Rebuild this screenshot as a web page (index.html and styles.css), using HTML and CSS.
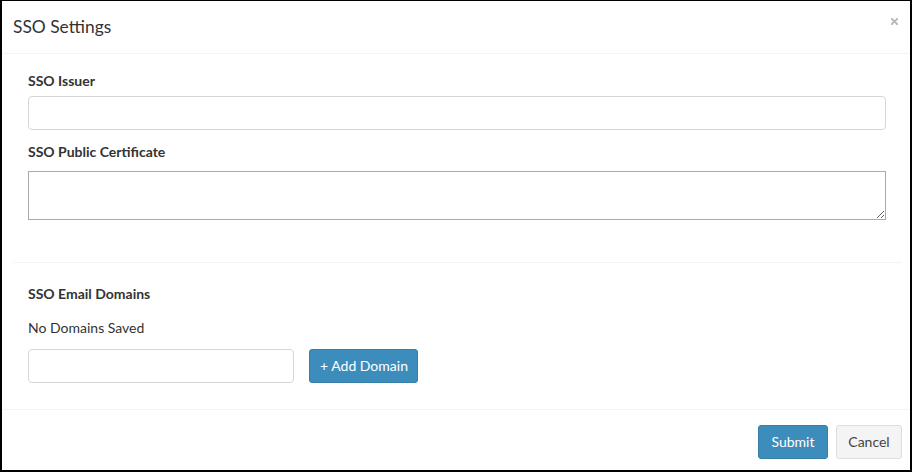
FILE: index.html
```html
<!DOCTYPE html>
<html lang="en">
<head>
<meta charset="utf-8">
<title>SSO Settings</title>
<link rel="stylesheet" href="styles.css">
</head>
<body>
<div class="modal">
  <div class="modal-header">
    <h4 class="modal-title">SSO Settings</h4>
    <button class="close" type="button" aria-label="Close">
      <svg width="7" height="7" viewBox="0 0 7 7"><path d="M0.8 0.8 L6.2 6.2 M6.2 0.8 L0.8 6.2" stroke="#b4b4b4" stroke-width="1.8" stroke-linecap="round"/></svg>
    </button>
  </div>
  <div class="modal-body">
    <div class="section">
      <div class="form-group first">
        <label class="label">SSO Issuer</label>
        <input class="form-control" type="text">
      </div>
      <div class="form-group second">
        <label class="label">SSO Public Certificate</label>
        <textarea class="textarea"></textarea>
      </div>
    </div>
    <hr class="divider">
    <div class="section domains">
      <label class="label">SSO Email Domains</label>
      <p class="note">No Domains Saved</p>
      <div class="domain-row">
        <input class="form-control domain-input" type="text">
        <button class="btn btn-primary add-btn" type="button">+ Add Domain</button>
      </div>
    </div>
  </div>
  <div class="modal-footer">
    <button class="btn btn-primary" type="button">Submit</button>
    <button class="btn btn-default" type="button">Cancel</button>
  </div>
</div>
</body>
</html>
```
FILE: styles.css
```css
* { box-sizing: border-box; }
html, body { margin: 0; padding: 0; background: #fff; }
body {
  font-family: "Lato", "Liberation Sans", sans-serif;
  font-size: 14px;
  color: #333;
}
.modal {
  width: 912px;
  height: 472px;
  border-top: 1px solid #000;
  border-left: 2px solid #000;
  border-right: 2px solid #000;
  border-bottom: 2px solid #000;
  display: flex;
  flex-direction: column;
}
.modal-header {
  height: 53px;
  border-bottom: 1px solid #f4f4f4;
  display: flex;
  justify-content: space-between;
  align-items: center;
  padding: 0 12px 0 11px;
}
.modal-title {
  margin: 0;
  font-size: 17.4px;
  font-weight: 400;
  line-height: 24px;
  color: #333;
}
.close {
  align-self: flex-start;
  margin-top: 17px;
  padding: 0;
  border: 0;
  background: none;
  width: 7px;
  height: 7px;
  display: flex;
}
.modal-body {
  padding: 17px 8px 0 11px;
  height: 355px;
}
.section { padding: 0 16px 0 15px; }
.label {
  display: block;
  font-weight: 700;
  line-height: 20px;
  margin-bottom: 5px;
}
.form-control {
  display: block;
  width: 100%;
  height: 34px;
  border: 1px solid #d6d6d6;
  border-radius: 4px;
  padding: 6px 12px;
  font: inherit;
  background: #fff;
}
.form-group.second { margin-top: 12px; }
.form-group.second .label { margin-bottom: 9px; }
.textarea {
  display: block;
  width: 100%;
  height: 49px;
  margin: 0;
  border: 1px solid #aaa;
  border-radius: 0;
  font: inherit;
  resize: vertical;
}
.divider {
  border: 0;
  border-top: 1px solid #f4f4f4;
  margin: 42px 0 21px;
}
.note {
  margin: 14px 0 11px;
  line-height: 20px;
}
.domain-row {
  display: flex;
  gap: 15px;
  align-items: flex-start;
}
.domain-input { width: 266px; }
.btn {
  height: 34px;
  font: inherit;
  line-height: 20px;
  border-radius: 3px;
  border: 1px solid transparent;
  padding: 6px 10px;
  white-space: nowrap;
  cursor: pointer;
}
.btn-primary {
  background: #3c8dbc;
  border-color: #367fa9;
  color: #fff;
}
.btn-default {
  background: #f4f4f4;
  border-color: #ddd;
  color: #444;
}
.add-btn { width: 109px; }
.modal-footer {
  border-top: 1px solid #f4f4f4;
  padding: 15px 8px 0 0;
  display: flex;
  justify-content: flex-end;
  gap: 8px;
}
.modal-footer .btn-primary { width: 70px; }
.modal-footer .btn-default { width: 66px; }
```
